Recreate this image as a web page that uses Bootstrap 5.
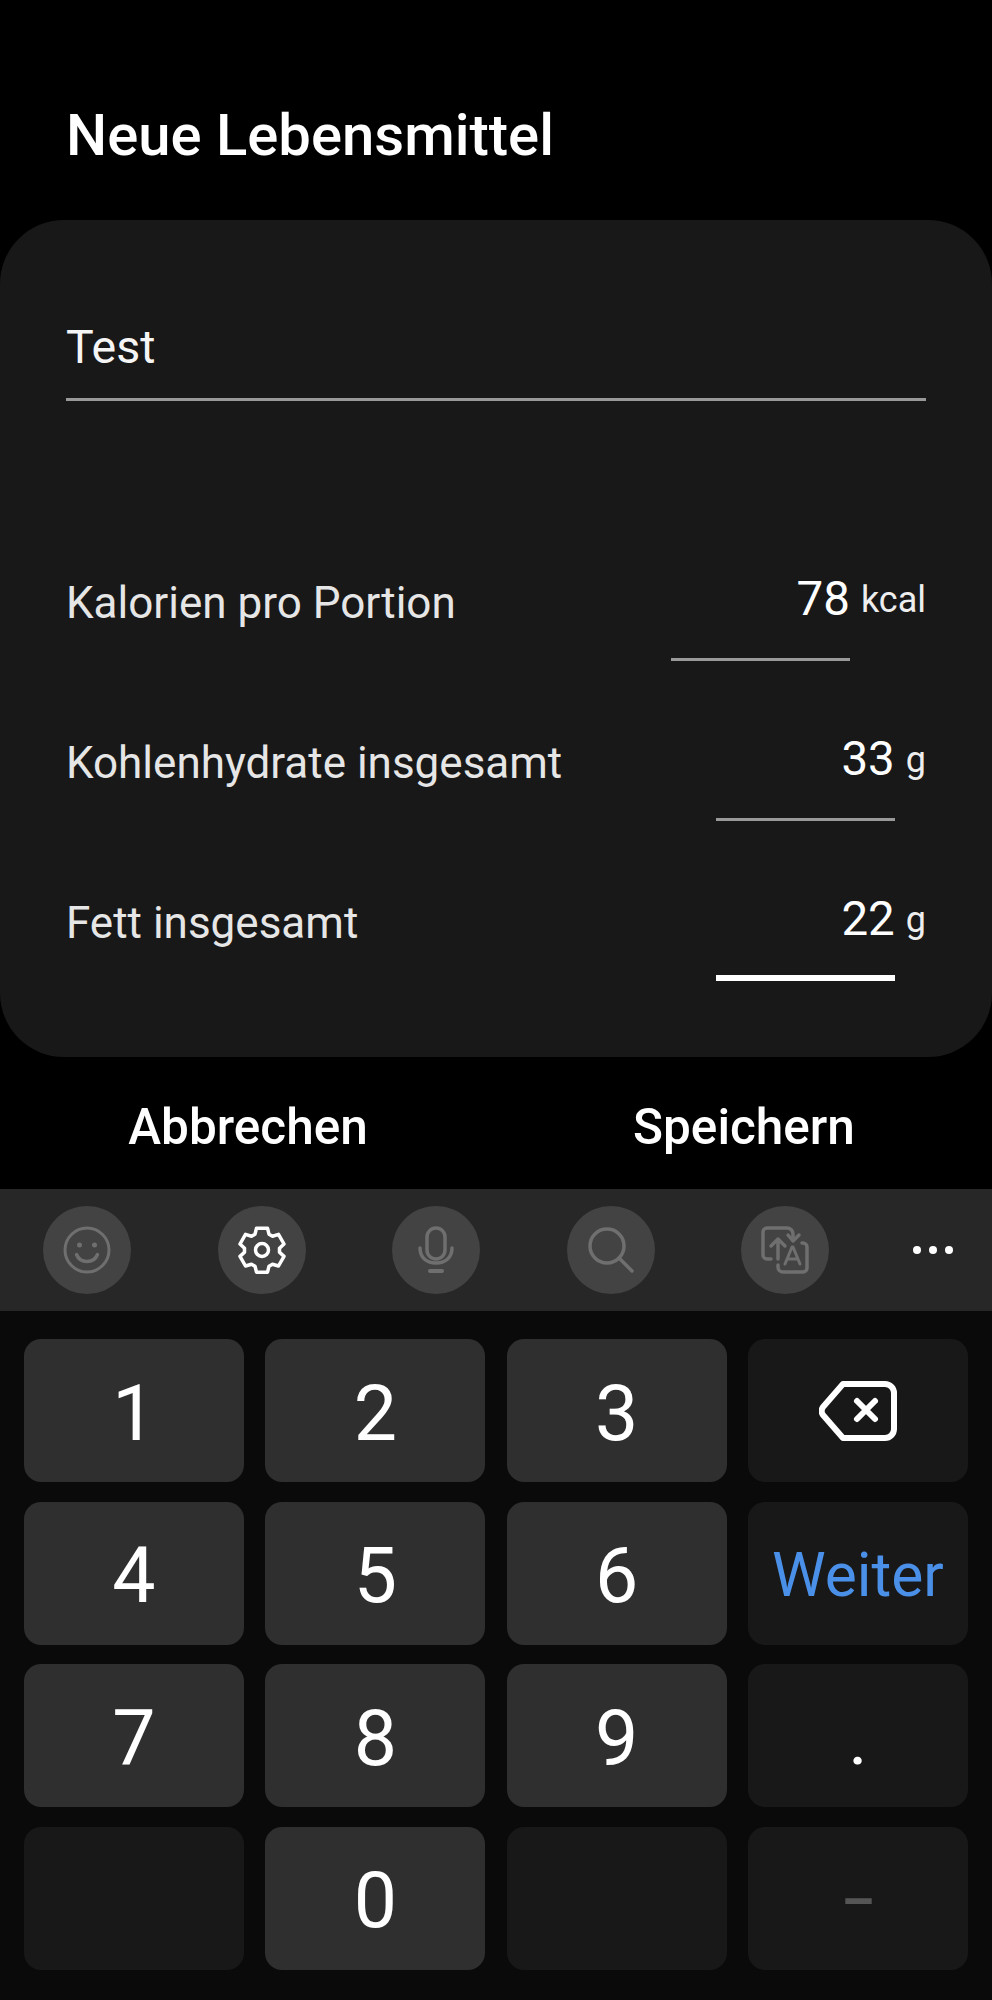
<!DOCTYPE html>
<html lang="de">
<head>
  <meta charset="UTF-8" />
  <meta name="viewport" content="width=device-width, initial-scale=1.0"/>
  <title>Neue Lebensmittel</title>
  <link href="https://cdn.jsdelivr.net/npm/bootstrap@5.3.2/dist/css/bootstrap.min.css" rel="stylesheet"/>
  <style>
    html, body { background: #000; }
    body { width: 992px; height: 2000px; overflow: hidden; font-family: Roboto, "Liberation Sans", sans-serif; color: #fff; }
    .page-head { height: 220px; padding: 102px 66px 0; }
    .page-title { font-size: 58px; line-height: 66px; font-weight: 500; margin: 0; }
    .food-panel { height: 837px; background: #181818; border-radius: 64px; padding: 100px 66px 0; }
    .name-field { height: 81px; border-bottom: 3px solid #999; font-size: 46.500px; line-height: 54px; color: #f5f5f5; }
    .nutri-row { height: 160px; }
    .nutri-first { margin-top: 167px; }
    .nutri-label { font-size: 44px; line-height: 50px; color: #e6e6e6; padding-top: 10px; }
    .nutri-value { width: 179px; height: 93px; padding-top: 4px; font-size: 47.500px; line-height: 54px; text-align: right; border-bottom: 3px solid #999; }
    .nutri-value.is-active { border-bottom: 6px solid #fff; }
    .nutri-unit { font-size: 36px; line-height: 50px; margin-left: 11px; padding-top: 7px; color: #eee; }
    .action-bar { height: 132px; }
    .action-btn { font-size: 49.500px; line-height: 56px; font-weight: 500; color: #fff; width: 496px; padding: 0; border: 0; margin-top: 7px; }
    .tool-bar { height: 122px; background: #272727; padding: 0 0 0 43px; }
    .tool-btn { width: 88px; height: 88px; border-radius: 50%; background: #434343; }
    .tool-gap { width: 86.500px; }
    .tool-more { width: 60px; margin-left: 74px; gap: 8px; }
    .tool-dot { width: 8px; height: 8px; border-radius: 50%; background: #fff; }
    .key-pad { height: 689px; background: #0a0a0a; padding: 28px 24px 0; display: grid; grid-template-columns: repeat(4, 220px); grid-auto-rows: 143px; column-gap: 21.300px; row-gap: 19.600px; }
    .pad-key { border-radius: 17px; background: #2f2f2f; font-size: 77px; line-height: 1; font-weight: 400; padding-top: 7px; }
    .pad-key.is-dark { background: #181818; }
    .pad-key.key-back { padding-top: 0; }
    .key-next { font-size: 60.500px; font-weight: 400; color: #4a90e8; }
    .key-dot { font-size: 60px; padding-top: 16px; font-weight: 500; }
    .key-minus { font-size: 52px; font-weight: 700; color: #555; padding-top: 8px; }
  </style>
</head>
<body>
  <header class="page-head">
    <h1 class="page-title">Neue Lebensmittel</h1>
  </header>

  <main class="food-panel">
    <div class="name-field">Test</div>

    <div class="nutri-row nutri-first d-flex justify-content-between">
      <div class="nutri-label">Kalorien pro Portion</div>
      <div class="d-flex">
        <div class="nutri-value">78</div>
        <div class="nutri-unit">kcal</div>
      </div>
    </div>
    <div class="nutri-row d-flex justify-content-between">
      <div class="nutri-label">Kohlenhydrate insgesamt</div>
      <div class="d-flex">
        <div class="nutri-value">33</div>
        <div class="nutri-unit">g</div>
      </div>
    </div>
    <div class="nutri-row d-flex justify-content-between">
      <div class="nutri-label">Fett insgesamt</div>
      <div class="d-flex">
        <div class="nutri-value is-active">22</div>
        <div class="nutri-unit">g</div>
      </div>
    </div>
  </main>

  <div class="action-bar d-flex align-items-center">
    <button type="button" class="btn action-btn">Abbrechen</button>
    <button type="button" class="btn action-btn">Speichern</button>
  </div>

  <div class="tool-bar d-flex align-items-center">
    <div class="tool-btn d-flex align-items-center justify-content-center">
      <svg width="48" height="48" viewBox="0 0 48 48" fill="none" stroke="#6f6f6f" stroke-width="3" stroke-linecap="round">
        <circle cx="24" cy="24" r="22"/>
        <path d="M13.500 28.500c2 5 6 7 10.500 7s8.500-2 10.500-7" stroke-width="3.500"/>
        <circle cx="16.500" cy="19" r="2.500" fill="#6f6f6f" stroke="none"/>
        <circle cx="31.500" cy="19" r="2.500" fill="#6f6f6f" stroke="none"/>
      </svg>
    </div>
    <div class="tool-gap"></div>
    <div class="tool-btn d-flex align-items-center justify-content-center">
      <svg width="48" height="48" viewBox="0 0 48 48" fill="none" stroke="#fff" stroke-width="3.500" stroke-linejoin="round">
        <path d="M18.500 2.500h11l1.500 6 3.500 2 6-1.800 5.500 9.600-4.500 4.200v4l4.500 4.200-5.500 9.600-6-1.800-3.500 2-1.500 6h-11l-1.500-6-3.500-2-6 1.800-5.500-9.600 4.500-4.200v-4l-4.500-4.200 5.500-9.600 6 1.800 3.500-2z" transform="translate(0 -.3)"/>
        <circle cx="24" cy="24" r="6.500"/>
      </svg>
    </div>
    <div class="tool-gap"></div>
    <div class="tool-btn d-flex align-items-center justify-content-center">
      <svg width="48" height="48" viewBox="0 0 48 48" fill="none" stroke="#6f6f6f" stroke-width="3.500" stroke-linecap="round">
        <rect x="15" y="2" width="18" height="31" rx="9"/>
        <path d="M8 22c0 10 7 15 16 15s16-5 16-15"/>
        <path d="M18 45h12" stroke-width="4"/>
      </svg>
    </div>
    <div class="tool-gap"></div>
    <div class="tool-btn d-flex align-items-center justify-content-center">
      <svg width="48" height="48" viewBox="0 0 48 48" fill="none" stroke="#6f6f6f" stroke-width="3.500" stroke-linecap="round">
        <circle cx="20" cy="20" r="17"/>
        <path d="M32 32l13 13"/>
      </svg>
    </div>
    <div class="tool-gap"></div>
    <div class="tool-btn d-flex align-items-center justify-content-center">
      <svg width="48" height="48" viewBox="0 0 48 48" fill="none" stroke="#6f6f6f" stroke-width="3.500" stroke-linecap="round" stroke-linejoin="round">
        <path d="M10 33H6a4 4 0 0 1-4-4V6a4 4 0 0 1 4-4h20a6 6 0 0 1 6 6v3"/>
        <path d="M27 9l5 6 6-6"/>
        <path d="M10 20l7-7 7 7M17 14v19"/>
        <path d="M41 17h1a4 4 0 0 1 4 4v21a4 4 0 0 1-4 4H22a5 5 0 0 1-5-5v-2"/>
        <path d="M24 38l7-17h1l7 17M27 33h10" stroke-width="3"/>
      </svg>
    </div>
    <div class="tool-more d-flex align-items-center justify-content-center">
      <span class="tool-dot"></span><span class="tool-dot"></span><span class="tool-dot"></span>
    </div>
  </div>

  <div class="key-pad">
    <div class="pad-key d-flex align-items-center justify-content-center">1</div>
    <div class="pad-key d-flex align-items-center justify-content-center">2</div>
    <div class="pad-key d-flex align-items-center justify-content-center">3</div>
    <div class="pad-key is-dark key-back d-flex align-items-center justify-content-center">
      <svg width="78" height="60" viewBox="0 0 78 60" fill="none" stroke="#fff" stroke-width="6" stroke-linecap="round" stroke-linejoin="round">
        <path d="M24 3h42a9 9 0 0 1 9 9v36a9 9 0 0 1-9 9H24L4 34a7 7 0 0 1 0-8z"/>
        <path d="M38 20l18 18M56 20L38 38"/>
      </svg>
    </div>
    <div class="pad-key d-flex align-items-center justify-content-center">4</div>
    <div class="pad-key d-flex align-items-center justify-content-center">5</div>
    <div class="pad-key d-flex align-items-center justify-content-center">6</div>
    <div class="pad-key is-dark key-next d-flex align-items-center justify-content-center">Weiter</div>
    <div class="pad-key d-flex align-items-center justify-content-center">7</div>
    <div class="pad-key d-flex align-items-center justify-content-center">8</div>
    <div class="pad-key d-flex align-items-center justify-content-center">9</div>
    <div class="pad-key is-dark key-dot d-flex align-items-center justify-content-center">.</div>
    <div class="pad-key is-dark"></div>
    <div class="pad-key d-flex align-items-center justify-content-center">0</div>
    <div class="pad-key is-dark"></div>
    <div class="pad-key is-dark key-minus d-flex align-items-center justify-content-center">–</div>
  </div>

  <script src="https://cdn.jsdelivr.net/npm/bootstrap@5.3.2/dist/js/bootstrap.bundle.min.js"></script>
</body>
</html>
